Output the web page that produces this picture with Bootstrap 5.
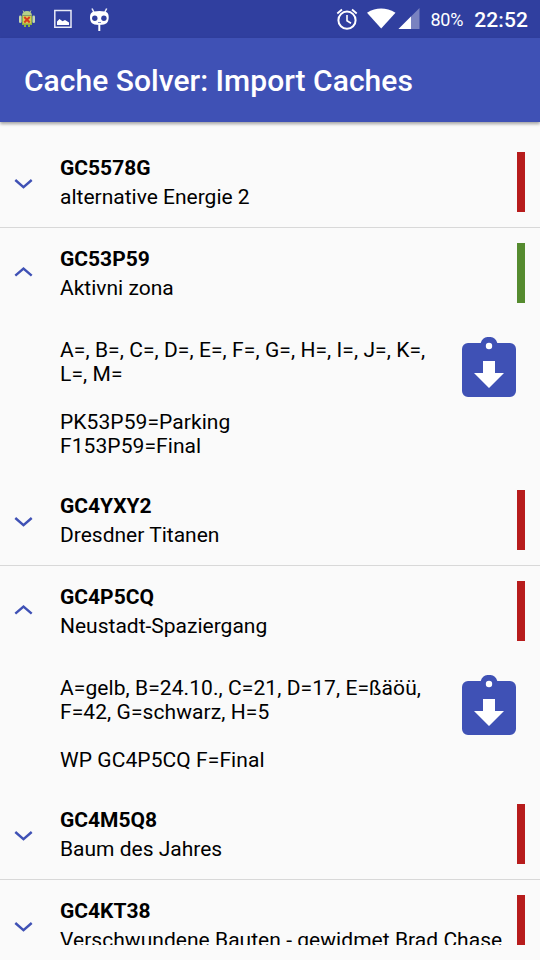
<!DOCTYPE html>
<html lang="en">
<head>
<meta charset="utf-8">
<meta name="viewport" content="width=device-width, initial-scale=1">
<title>Cache Solver: Import Caches</title>
<link href="https://cdn.jsdelivr.net/npm/bootstrap@5.3.0/dist/css/bootstrap.min.css" rel="stylesheet">
<style>
body{font-family:Roboto,"Noto Sans",sans-serif;font-size:21px;line-height:24px;color:#000;background:#fafafa;height:960px}
.status{height:38px;background:#303f9f;color:#fff}
.left-icons{padding-left:18px}
.right-icons{padding-right:12px}
.status-icons{margin-right:-1px}
.battery{font-size:18px;margin-left:11px;padding-top:2px;letter-spacing:-.2px}
.clock{font-size:21px;font-weight:500;margin-left:11px;padding-top:2px;letter-spacing:.1px}
.cyan{margin-left:14px}
.appbar{height:84px;background:#3f51b5;box-shadow:0 2px 3px rgba(0,0,0,.35)}
.appbar h1{font-size:30px;font-weight:500;line-height:36px;padding:2px 0 0 24px;letter-spacing:.03px}
.caches{margin-top:15px;height:808px}
.group{height:90px;padding:15px 15px 15px 0}
.ruled{height:91px;border-bottom:1px solid #d8d8d8}
.chev{width:60px;padding-left:14px}
.chev svg{display:block}
.down{padding-top:26px}
.up{padding-top:23px}
.code{font-weight:700;padding-top:4px;height:33px}
.long-name{letter-spacing:.04px}
.stripe{width:8px;height:60px;background:#b71c1c}
.done{background:#558b2f}
.detail{padding:20px 24px 17px 60px}
.vars{width:380px;white-space:pre-line;letter-spacing:.08px}
.import-btn{margin-top:-1px}
</style>
<script src="https://cdn.jsdelivr.net/npm/bootstrap@5.3.0/dist/js/bootstrap.bundle.min.js"></script>
</head>
<body class="d-flex flex-column overflow-hidden">
<svg class="d-none">
  <symbol id="chevron-down" viewBox="0 0 20 12"><path d="M1.3 2L9.5 9.200L17.700 2" fill="none" stroke="#3f51b5" stroke-width="2.400"/></symbol>
  <symbol id="chevron-up" viewBox="0 0 20 12"><path d="M1.3 9.700L9.500 2.500L17.700 9.700" fill="none" stroke="#3f51b5" stroke-width="2.400"/></symbol>
  <symbol id="clip" viewBox="0 0 54 60"><path d="M6 6H18.700A8.700 8.700 0 0 1 35.300 6H48a6 6 0 0 1 6 6V54a6 6 0 0 1-6 6H6a6 6 0 0 1-6-6V12a6 6 0 0 1 6-6Z" fill="#3f51b5"/><circle cx="27" cy="9" r="3.200" fill="#fff"/><path d="M21 24H33V36H42L27 51L12 36H21Z" fill="#fff"/></symbol>
</svg>

<header class="position-relative z-1">
  <div class="status d-flex align-items-center justify-content-between">
    <div class="left-icons d-flex align-items-center">
      <svg width="18" height="20" viewBox="0 0 18 20"><path d="M5 1.500L6.500 4M13 1.500L11.500 4" stroke="#b7cf8e" stroke-width="1"/><path d="M4 6.500Q4.500 2 9 2T14 6.500Z" fill="#b5d08a"/><rect x="1" y="6.500" width="2.600" height="7.500" rx="1.300" fill="#c6d8ad"/><rect x="14.400" y="6.500" width="2.600" height="7.500" rx="1.300" fill="#c6d8ad"/><path d="M4 6.500H14V16H12V18H10V16H8V18H6V16H4Z" fill="#8fb33f"/><rect x="5" y="7" width="8" height="7.500" fill="#d8c85a"/><path d="M6.300 8L11.700 13.500M11.700 8L6.300 13.500" stroke="#d83a1d" stroke-width="1.900"/></svg>
      <svg class="ms-3" width="22" height="20" viewBox="0 0 22 20"><path d="M2.800 1.500H19V18.200H2.800Z" fill="none" stroke="#e8eaf6" stroke-width="1.500"/><path d="M5 16V12.500L7.500 10L10.500 12.300L13 11L17 13.500V16Z" fill="#fff"/></svg>
      <svg class="cyan" width="22" height="24" viewBox="0 0 22 24"><path d="M4 1.500L5.800 5M18.700 1.500L16.900 5" stroke="#e8eaf6" stroke-width="1.600"/><path d="M6 4.500Q11.500 3.500 16.500 4.500C20 5.200 20.700 7 20.700 10C20.700 15 19 18 11.300 18S2 15 2 10C2 7 3 5.200 6 4.500Z" fill="#fff"/><circle cx="6.800" cy="11.300" r="2.700" fill="#303f9f"/><circle cx="15.900" cy="11.300" r="2.700" fill="#303f9f"/><path d="M10 15.500H13" stroke="#7986cb"/><path d="M11.300 18V24" stroke="#fff" stroke-width="2"/></svg>
    </div>
    <div class="right-icons d-flex align-items-center">
      <div class="status-icons d-flex">
      <svg width="22" height="22" viewBox="0 0 22 22"><circle cx="11" cy="12.200" r="8.600" fill="none" stroke="#fff" stroke-width="2"/><path d="M1.300 5.500L6 1.500M20.700 5.500L16 1.500" stroke="#fff" stroke-width="1.800"/><path d="M11 7V12.800L15 15.200" fill="none" stroke="#fff" stroke-width="1.600"/></svg>
      <svg width="62" height="22" viewBox="0 0 62 22"><path d="M9 4.700Q23 -3.500 37.500 4.700L23.200 20.500Z" fill="#fff"/><path d="M61.500 0V21H40.500Z" fill="#7982c0"/><path d="M53 8.500V21H40.500Z" fill="#fff"/></svg>
      </div>
      <span class="battery">80%</span><span class="clock">22:52</span>
    </div>
  </div>
  <div class="appbar d-flex align-items-center text-white"><h1 class="m-0">Cache Solver: Import Caches</h1></div>
</header>

<main class="caches overflow-hidden flex-shrink-0">
  <div class="group ruled d-flex">
    <div class="chev down"><svg width="20" height="12"><use href="#chevron-down"/></svg></div>
    <div class="flex-grow-1"><div class="code">GC5578G</div><div>alternative Energie 2</div></div>
    <div class="stripe"></div>
  </div>
  <div class="group d-flex">
    <div class="chev up"><svg width="20" height="12"><use href="#chevron-up"/></svg></div>
    <div class="flex-grow-1"><div class="code">GC53P59</div><div>Aktivni zona</div></div>
    <div class="stripe done"></div>
  </div>
  <div class="detail d-flex justify-content-between align-items-start">
    <div class="vars">A=, B=, C=, D=, E=, F=, G=, H=, I=, J=, K=, L=, M=

PK53P59=Parking
F153P59=Final</div>
    <svg class="import-btn" width="54" height="60"><use href="#clip"/></svg>
  </div>
  <div class="group ruled d-flex">
    <div class="chev down"><svg width="20" height="12"><use href="#chevron-down"/></svg></div>
    <div class="flex-grow-1"><div class="code">GC4YXY2</div><div>Dresdner Titanen</div></div>
    <div class="stripe"></div>
  </div>
  <div class="group d-flex">
    <div class="chev up"><svg width="20" height="12"><use href="#chevron-up"/></svg></div>
    <div class="flex-grow-1"><div class="code">GC4P5CQ</div><div>Neustadt-Spaziergang</div></div>
    <div class="stripe"></div>
  </div>
  <div class="detail d-flex justify-content-between align-items-start">
    <div class="vars">A=gelb, B=24.10., C=21, D=17, E=ßäöü, F=42, G=schwarz, H=5

WP GC4P5CQ F=Final</div>
    <svg class="import-btn" width="54" height="60"><use href="#clip"/></svg>
  </div>
  <div class="group ruled d-flex">
    <div class="chev down"><svg width="20" height="12"><use href="#chevron-down"/></svg></div>
    <div class="flex-grow-1"><div class="code">GC4M5Q8</div><div>Baum des Jahres</div></div>
    <div class="stripe"></div>
  </div>
  <div class="group d-flex">
    <div class="chev down"><svg width="20" height="12"><use href="#chevron-down"/></svg></div>
    <div class="flex-grow-1"><div class="code">GC4KT38</div><div class="long-name text-nowrap">Verschwundene Bauten - gewidmet Brad Chase</div></div>
    <div class="stripe"></div>
  </div>
</main>
</body>
</html>
